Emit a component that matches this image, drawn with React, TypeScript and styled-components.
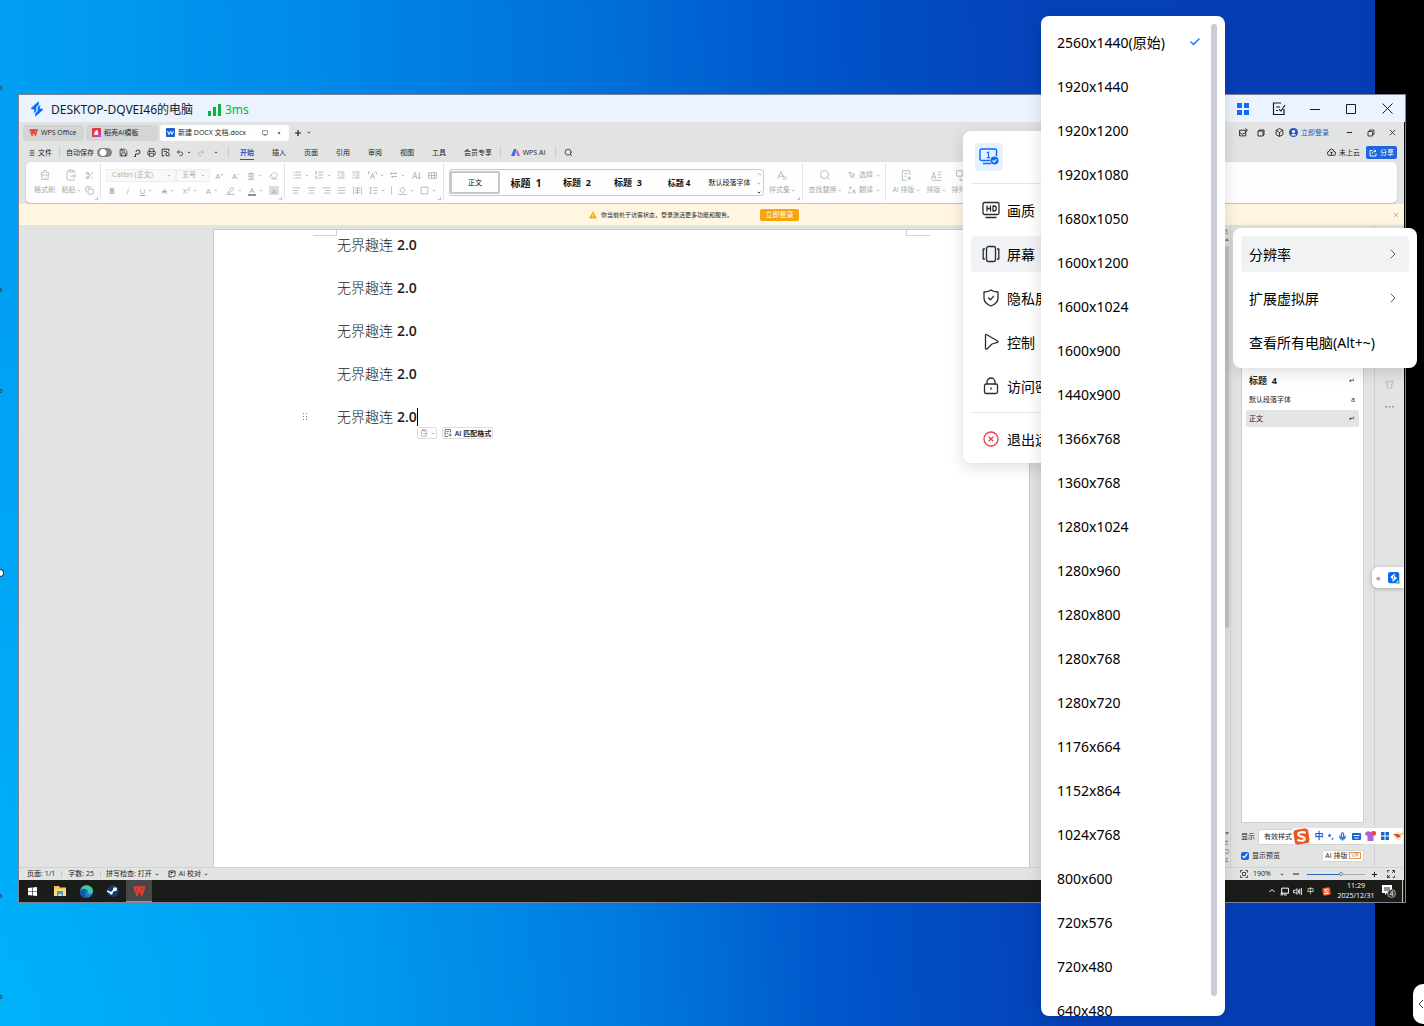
import React from 'react';
import styled, { createGlobalStyle, css } from 'styled-components';
import {
  Scissors, Copy, ClipboardPaste, Save, Printer, Undo2, Redo2, Search, Eraser, List, ListOrdered,
  AlignLeft, AlignCenter, AlignRight, AlignJustify, Shirt, Check, ChevronRight, Mic,
} from 'lucide-react';

const uiFont = `'Noto Sans', 'Noto Sans CJK SC', sans-serif`;
const officeFont = `'Open Sans', 'Noto Sans CJK SC', sans-serif`;

const GlobalStyle = createGlobalStyle`
  * { box-sizing: border-box; }
  html, body { margin: 0; height: 100%; overflow: hidden; }
  body { font-family: ${uiFont}; background: #000; }
  button, input, select { font: inherit; color: inherit; margin: 0; }
  button { padding: 0; border: 0; background: none; cursor: pointer; }
  ul { list-style: none; margin: 0; padding: 0; }
  svg { display: block; flex: none; }
  p { margin: 0; }
`;

/* ---------- desktop ---------- */

const Desktop = styled.div`
  position: relative;
  display: flex;
  height: 100vh;
  overflow: hidden;
  background: #000;
`;

const Wallpaper = styled.div`
  flex: 1;
  margin-right: 49px;
  background: linear-gradient(88deg, #00a2f4 0%, #008dea 22%, #006fda 45%, #0052c8 62%, #0443ba 74%, #063cb2 100%);
  position: relative;
  &::after {
    content: '';
    position: absolute;
    inset: 0;
    background: radial-gradient(ellipse 60% 70% at 0% 100%, rgba(0, 190, 255, 0.55) 0%, rgba(0, 170, 250, 0) 100%);
  }
`;

const EdgeMark = styled.i<{ $y: number; $big?: boolean }>`
  position: absolute;
  left: 0;
  top: ${(p) => p.$y}px;
  width: ${(p) => (p.$big ? 4 : 2)}px;
  height: ${(p) => (p.$big ? 8 : 4)}px;
  border: 1px solid #1b3a5e;
  border-left: 0;
  border-radius: 0 4px 4px 0;
  background: ${(p) => (p.$big ? '#fff' : '#5f7f98')};
  z-index: 1;
`;

const EdgeHandle = styled.button`
  position: absolute;
  right: 0;
  bottom: 2px;
  width: 11px;
  height: 40px;
  padding-left: 4px;
  border-radius: 10px 0 0 10px;
  background: #fff;
  overflow: hidden;
`;

/* ---------- remote window ---------- */

const Window = styled.main`
  position: absolute;
  inset: 94px 18px 123px 18px;
  display: flex;
  flex-direction: column;
  border: 1px solid #7b8494;
  background: #000;
`;

const TitleBar = styled.header`
  display: flex;
  align-items: center;
  flex: none;
  height: 27px;
  padding-left: 10px;
  background: #ebf3ff;
  color: #171b26;
`;

const TitleText = styled.h1`
  margin: 0 0 0 6px;
  padding-top: 2px;
  min-width: 157px;
  font-size: 12px;
  line-height: 25px;
  font-weight: 400;
`;

const Latency = styled.span`
  display: flex;
  align-items: center;
  gap: 4px;
  flex: 1;
  padding-top: 2px;
  font-size: 12px;
  line-height: 25px;
  color: #08b43c;
`;

const FrameButton = styled.button`
  display: grid;
  place-items: center;
  width: 36px;
  height: 26px;
`;

const Remote = styled.section`
  display: flex;
  flex-direction: column;
  flex: 1;
  min-height: 0;
  margin-right: 1px;
  background: #e1e4e2;
  font-family: ${officeFont};
  font-size: 7px;
  line-height: 10px;
  color: #1f2120;
`;

const TabStrip = styled.div`
  display: flex;
  align-items: center;
  flex: none;
  height: 21px;
  padding: 0 2px 0 4px;
  gap: 2px;
`;

const Tab = styled.button<{ $w: number; $active?: boolean }>`
  display: flex;
  align-items: center;
  gap: 3px;
  width: ${(p) => p.$w}px;
  height: 16px;
  padding: 0 6px;
  border-radius: 3px;
  white-space: nowrap;
  background: ${(p) => (p.$active ? '#fefefe' : '#d3d6d4')};
`;

const Spacer = styled.span`
  flex: 1;
`;

const Cell = styled.button<{ $w: number; $faint?: boolean }>`
  display: flex;
  align-items: center;
  justify-content: center;
  gap: 3px;
  flex: none;
  width: ${(p) => p.$w}px;
  height: 12px;
  white-space: nowrap;
  ${(p) => p.$faint && css`color: #a9acaa;`}
`;

const LoginLink = styled.a`
  display: flex;
  align-items: center;
  gap: 3px;
  margin: 0 8px 0 0;
  color: #2458b8;
  text-decoration: none;
  white-space: nowrap;
`;

const MenuRow = styled.div`
  display: flex;
  align-items: center;
  flex: none;
  height: 19px;
  padding: 0 7px 0 9px;
`;

const Divider = styled.i<{ $h?: number; $m?: number }>`
  flex: none;
  width: 1px;
  height: ${(p) => p.$h ?? 9}px;
  margin: 0 ${(p) => p.$m ?? 6}px;
  background: #c6c9c7;
`;

const MenuItems = styled.nav`
  display: flex;
  gap: 18px;
  margin-left: 5px;
`;

const MenuItem = styled.button<{ $active?: boolean }>`
  height: 15px;
  line-height: 13px;
  white-space: nowrap;
  border-bottom: 1px solid ${(p) => (p.$active ? '#2458b8' : 'transparent')};
  ${(p) => p.$active && css`color: #2458b8; font-weight: 700;`}
`;

const AutoSave = styled.label`
  display: flex;
  align-items: center;
  gap: 3px;
  margin-right: 4px;
  white-space: nowrap;
`;

const Toggle = styled.input`
  appearance: none;
  width: 15px;
  height: 9px;
  border-radius: 5px;
  background: radial-gradient(circle at 5px 50%, #fff 0 3px, transparent 4px) #808381;
  border: 1px solid #808381;
`;

const ShareButton = styled.button`
  display: flex;
  align-items: center;
  justify-content: center;
  gap: 3px;
  width: 31px;
  height: 13px;
  margin-left: 7px;
  border-radius: 2px;
  background: #1f65dd;
  color: #fff;
`;

const Ribbon = styled.div`
  display: flex;
  align-items: center;
  flex: none;
  height: 41px;
  margin: 0 7px 1px;
  border-radius: 5px;
  background: #fdfefd;
  color: #a9acaa;
  box-shadow: 0 1px 2px rgba(0, 0, 0, 0.18);
  overflow: hidden;
`;

const Group = styled.div<{ $w: number }>`
  position: relative;
  display: flex;
  flex-direction: column;
  justify-content: center;
  gap: 3px;
  flex: none;
  width: ${(p) => p.$w}px;
  height: 37px;
  border-right: 1px solid #e2e4e3;
`;

const Line = styled.div<{ $pad?: number }>`
  display: flex;
  align-items: center;
  height: 12px;
  padding-left: ${(p) => p.$pad ?? 0}px;
`;

const Columns = styled.div`
  display: flex;
`;

const Pair = styled.div`
  display: flex;
  flex-direction: column;
  gap: 3px;
`;

const Stack = styled.button<{ $w: number }>`
  display: flex;
  flex-direction: column;
  align-items: center;
  gap: 3px;
  flex: none;
  width: ${(p) => p.$w}px;
  white-space: nowrap;
`;

const StackIcon = styled.span`
  display: grid;
  place-items: center;
  height: 12px;
`;

const StackLabel = styled.span`
  display: flex;
  align-items: center;
  gap: 1px;
  height: 12px;
`;

const Corner = styled.i`
  position: absolute;
  right: 2px;
  bottom: 1px;
  width: 3px;
  height: 3px;
  border: solid #bfc2c0;
  border-width: 0 1px 1px 0;
`;

const Combo = styled.span<{ $w: number }>`
  display: flex;
  align-items: center;
  width: ${(p) => p.$w}px;
  height: 13px;
  padding-right: 4px;
  border: 1px solid #eceeed;
  background: #f8f9f8;
  select {
    appearance: none;
    flex: 1;
    min-width: 0;
    padding: 0 0 0 5px;
    border: 0;
    background: none;
    outline: 0;
  }
`;

const Letter = styled.span<{ $bold?: boolean; $italic?: boolean; $under?: boolean; $strike?: boolean; $bar?: boolean; $fill?: boolean }>`
  font-size: 8px;
  line-height: 9px;
  font-weight: ${(p) => (p.$bold ? 700 : 400)};
  font-style: ${(p) => (p.$italic ? 'italic' : 'normal')};
  text-decoration: ${(p) => (p.$under ? 'underline' : p.$strike ? 'line-through' : 'none')};
  ${(p) => p.$bar && css`border-bottom: 2px solid #8f9290; padding: 0 1px;`}
  ${(p) => p.$fill && css`background: #dcdfdd; padding: 0 2px;`}
`;

const Gallery = styled.div`
  display: flex;
  align-items: center;
  flex: none;
  width: 315px;
  height: 27px;
  margin: 0 5px;
  border: 1px solid #c9cccb;
  border-radius: 3px;
  color: #111;
`;

const StyleChip = styled.button<{ $w: number; $size?: number; $bold?: boolean; $active?: boolean }>`
  flex: none;
  width: ${(p) => p.$w}px;
  height: 23px;
  font-size: ${(p) => p.$size ?? 7}px;
  font-weight: ${(p) => (p.$bold ? 700 : 400)};
  white-space: pre;
  ${(p) => p.$active && css`border: 2px solid #c5c8c6; border-radius: 2px;`}
`;

const GalleryArrows = styled.span`
  display: flex;
  flex-direction: column;
  justify-content: space-between;
  align-items: center;
  width: 8px;
  height: 22px;
  color: #999;
`;

const Notice = styled.div`
  display: flex;
  align-items: center;
  flex: none;
  height: 21px;
  padding: 0 5px 0 570px;
  background: #fff5e1;
`;

const NoticeText = styled.p`
  margin: 0 18px 0 4px;
  min-width: 141px;
  font-size: 6px;
  white-space: nowrap;
`;

const NoticeButton = styled.button`
  width: 39px;
  height: 12px;
  border-radius: 2px;
  background: #f5a50d;
  color: #fff;
`;

/* ---------- workspace ---------- */

const Workspace = styled.div`
  position: relative;
  display: flex;
  flex: 1;
  min-height: 0;
`;

const Canvas = styled.div`
  flex: 1;
  display: flex;
  padding: 4px 193px 0 194px;
`;

const Page = styled.article`
  position: relative;
  flex: 1;
  padding-left: 123px;
  background: #fefffe;
  border: solid #c9ccca;
  border-width: 1px 1px 0 1px;
  color: #1b1b1b;
  font-size: 14px;
`;

const CropMark = styled.i<{ $right?: boolean }>`
  position: absolute;
  top: 0;
  ${(p) => (p.$right ? 'right: 99px; border-width: 0 0 1px 1px;' : 'left: 99px; border-width: 0 1px 1px 0;')}
  width: 24px;
  height: 6px;
  border-style: solid;
  border-color: #cfd2d0;
`;

const Paragraph = styled.p`
  position: relative;
  display: flex;
  gap: 4px;
  height: 43px;
  line-height: 30px;
  font-weight: 300;
  b { font-weight: 600; }
`;

const Caret = styled.i`
  width: 1px;
  height: 18px;
  margin: 6px 0 0 -4px;
  background: #000;
`;

const DragDots = styled.span`
  position: absolute;
  left: -34px;
  top: 11px;
`;

const PasteHints = styled.div`
  display: flex;
  gap: 5px;
  margin: -18px 0 0 80px;
  font-size: 7px;
  line-height: 9px;
`;

const HintButton = styled.button<{ $w: number }>`
  display: flex;
  align-items: center;
  justify-content: center;
  gap: 3px;
  width: ${(p) => p.$w}px;
  height: 12px;
  border: 1px solid #dcdedd;
  border-radius: 2px;
  background: #fff;
  white-space: nowrap;
  font-weight: 600;
`;

const ScrollColumn = styled.div`
  display: flex;
  flex-direction: column;
  align-items: center;
  gap: 4px;
  flex: none;
  width: 7px;
  padding: 4px 0 4px;
  color: #8a8d8b;
`;

const ScrollThumb = styled.i`
  width: 4px;
  height: 382px;
  border-radius: 2px;
  background: #c3c6c4;
`;

const StylePanel = styled.aside`
  display: flex;
  flex-direction: column;
  flex: none;
  width: 144px;
  padding: 6px 10px 2px;
  border-left: 1px solid #d3d6d4;
`;

const StyleList = styled.ul`
  flex: 1;
  margin-bottom: 4px;
  padding: 140px 4px 0;
  border: 1px solid #cfd2d0;
  background: #fefffe;
`;

const StyleRow = styled.li<{ $active?: boolean }>`
  display: flex;
  justify-content: space-between;
  align-items: center;
  height: 17px;
  margin-bottom: 2px;
  padding: 0 4px 0 3px;
  border-radius: 2px;
  background: ${(p) => (p.$active ? '#e2e5e3' : 'transparent')};
  b { font-size: 9px; white-space: pre; }
`;

const PanelLine = styled.div`
  display: flex;
  align-items: center;
  justify-content: space-between;
  height: 19px;
  label { display: flex; align-items: center; gap: 3px; }
`;

const FilterSelect = styled.select`
  appearance: none;
  width: 106px;
  height: 16px;
  padding: 0 5px;
  border: 1px solid #d2d5d3;
  border-radius: 2px;
  background: #fff;
`;

const Tick = styled.input`
  width: 8px;
  height: 8px;
  accent-color: #1b64dd;
`;

const PanelButton = styled.button`
  display: flex;
  align-items: center;
  justify-content: center;
  gap: 2px;
  width: 42px;
  height: 12px;
  border: 1px solid #d4d6d5;
  border-radius: 2px;
  background: #fff;
  white-space: nowrap;
`;

const Vip = styled.i`
  padding: 0 1px;
  border: 1px solid #d99b52;
  font-size: 5px;
  line-height: 5px;
  font-style: normal;
  color: #b9752a;
`;

const Rail = styled.div`
  display: flex;
  flex-direction: column;
  align-items: center;
  gap: 17px;
  flex: none;
  width: 30px;
  padding-top: 155px;
  border-left: 1px solid #d0d3d1;
  color: #999c9a;
`;

const FloatTab = styled.button`
  position: absolute;
  right: 0;
  top: 342px;
  display: flex;
  align-items: center;
  gap: 8px;
  width: 32px;
  height: 21px;
  padding-left: 4px;
  border-radius: 6px 0 0 6px;
  background: #fff;
  box-shadow: 0 1px 4px rgba(0, 0, 0, 0.25);
  font-size: 9px;
  color: #555;
`;

const ImeBar = styled.div`
  position: absolute;
  right: 1px;
  bottom: 23px;
  display: flex;
  align-items: center;
  justify-content: space-between;
  width: 110px;
  height: 16px;
  background: #fff;
  font-size: 9px;
  font-weight: 700;
  color: #1766cf;
`;

const StatusBar = styled.footer`
  display: flex;
  align-items: center;
  flex: none;
  height: 13px;
  padding: 0 3px 0 8px;
  border-top: 1px solid #cfd2d0;
  white-space: nowrap;
`;

const Zoom = styled.input`
  appearance: none;
  width: 58px;
  height: 5px;
  margin: 0 2px 0 6px;
  background: linear-gradient(90deg, #2b62bd 0 34px, #a9adab 34px) center / 100% 1px no-repeat;
  &::-webkit-slider-thumb {
    appearance: none;
    width: 4px;
    height: 4px;
    border-radius: 50%;
    background: #fff;
    border: 1px solid #777;
  }
`;

const Taskbar = styled.footer`
  display: flex;
  align-items: center;
  flex: none;
  height: 22px;
  background: #1a1c1a;
  color: #fff;
`;

const TaskButton = styled.button<{ $w?: number; $active?: boolean }>`
  display: grid;
  place-items: center;
  flex: none;
  width: ${(p) => p.$w ?? 27}px;
  height: 22px;
  ${(p) => p.$active && css`background: #454846; border-bottom: 1px solid #6fa6cf;`}
`;

const Clock = styled.time`
  width: 42px;
  text-align: center;
  line-height: 10px;
`;

/* ---------- popup menus ---------- */

const Popup = styled.nav`
  position: absolute;
  width: 184px;
  padding: 8px;
  border-radius: 8px;
  background: #fff;
  box-shadow: 0 4px 16px rgba(0, 0, 0, 0.14);
  font-size: 14px;
  line-height: 20px;
  color: #000;
`;

const ControlPopup = styled(Popup)`
  top: 131px;
  right: 277px;
  padding-bottom: 6px;
`;

const ResolutionPopup = styled(Popup)`
  top: 16px;
  bottom: 10px;
  right: 199px;
  overflow: hidden;
`;

const ScreenPopup = styled(Popup)`
  top: 228px;
  right: 7px;
`;

const PopupList = styled.ul`
  display: flex;
  flex-direction: column;
  gap: 8px;
`;

const PopupItem = styled.button<{ $active?: boolean }>`
  display: flex;
  align-items: center;
  gap: 4px;
  width: 100%;
  height: 36px;
  padding: 0 8px;
  border-radius: 4px;
  text-align: left;
  white-space: nowrap;
  background: ${(p) => (p.$active ? '#f1f2f4' : 'transparent')};
`;

const PopupIcon = styled.span`
  display: grid;
  place-items: center;
  width: 24px;
`;

const PopupLabel = styled.span`
  flex: 1;
  padding-top: 2px;
`;

const CheckMark = styled(Check)`
  margin-right: 8px;
`;

const Rule = styled.hr`
  height: 1px;
  margin: 8px 0;
  border: 0;
  background: #e5e6ea;
`;

const ScreenPick = styled.button`
  display: grid;
  place-items: center;
  width: 28px;
  height: 28px;
  margin: 4px 0 12px 4px;
  border-radius: 4px;
  background: #e6f0ff;
`;

const ResolutionThumb = styled.i`
  position: absolute;
  top: 8px;
  right: 8px;
  bottom: 20px;
  width: 6px;
  border-radius: 3px;
  background: #c8cdd6;
`;

/* ---------- drawings ---------- */

const Down = ({ c = 'currentColor' }: { c?: string }) => (
  <svg width="4" height="3" viewBox="0 0 5 4" fill="none" stroke={c}><path d="M.8 1 2.5 2.8 4.2 1" /></svg>
);

const Draw = ({ d, s = 10, w = 1.2, c = 'currentColor' }: { d: string; s?: number; w?: number; c?: string }) => (
  <svg width={s} height={s} viewBox="0 0 16 16" fill="none" stroke={c} strokeWidth={w * 16 / s} strokeLinejoin="round"><path d={d} /></svg>
);

const g = {
  outdent: 'M1 2h14M8 6h7M8 10h7M1 14h14M5 5 2 8l3 3',
  indent: 'M1 2h14M8 6h7M8 10h7M1 14h14M2 5l3 3-3 3',
  textFx: 'M1 2h3M1 2v4M15 2h-3M15 2v4M4 14 8 4l4 10M6 10h4',
  wrap: 'M2 5h11l-3-3M14 11H3l3 3M2 2v6',
  sort: 'M1 14 5 2l4 12M2 10h6M13 2v12M11 11l2 3 2-3',
  table: 'M1 3h14v10H1zM1 8h14M6 3v10M11 3v10',
  distribute: 'M1 1v14M15 1v14M4 4h8M4 8h8M4 12h8M8 2v12',
  spacing: 'M3 2v12M1 4l2-2 2 2M1 12l2 2 2-2M8 3h7M8 8h7M8 13h7',
  bucket: 'M3 8l5-6 5 6-5 4zM1 15h14',
  border: 'M2 2h12v12H2z',
  pen: 'M3 11 11 2l3 3-8 8H3zM1 15h14',
  cursor: 'M2 2l5 12 2-5 5-2zM10 10l4 4',
  translate: 'M2 3h6M5 1v2M2 8l5-5M9 15l3-8 3 8M10 12h4M2 11v3h4',
  layout: 'M13 7V1H2v14h6M5 5h5M5 9h3M12 9v6M9 12h6',
  textPage: 'M1 13 4 3l3 10M2 10h4M10 3h5M10 7h5M10 11h5M1 15h14',
  arrange: 'M1 1h8v8H1zM6 11v4h9V6h-4',
  styles: 'M1 13 6 2l5 11M3 9h6M9 14l5-6M12 15l3-3',
  brush: 'M6 4V1h4v3h4v4H2V4zM3 8v7h10V8M9 15v-4',
  monitor: 'M1 2h14v10H1zM5 15h6',
  inbox: 'M1 4h11v10H1zM1 8l5 3 6-3M11 1l4 3-4 3',
  layers: 'M4 4V2h10v10h-2M2 4h10v10H2z',
  cube: 'M8 1l6 3v8l-6 3-6-3V4zM2 4l6 4 6-4M8 8v7',
  minus: 'M2 8h12',
  restore: 'M2 5h9v9H2zM5 5V2h9v9h-3',
  close: 'M2 2l12 12M14 2 2 14',
  share: 'M7 3H2v11h12V9M6 10c0-4 3-6 8-6M11 1l3 3-3 3',
  cloud: 'M4 13a3 3 0 0 1 0-7 4 4 0 0 1 8 0 3 3 0 0 1 0 7zM8 12V7M6 9l2-2 2 2',
  plus: 'M8 2v12M2 8h12',
  link: 'M5 15v-5h5a4 4 0 1 0-4-4M5 15H2',
  preview: 'M14 6V2H2v12h4M5 6h5M12 8a3 3 0 1 1-1 6 3 3 0 0 1 1-6M14 13l2 2',
  fit: 'M1 5V1h4M11 1h4v4M15 11v4h-4M5 15H1v-4M5 5h6v6H5z',
  expand: 'M10 1h5v5M15 1l-5 5M6 15H1v-5M1 15l5-5M1 5V1h4M15 11v4h-4',
  docCheck: 'M14 8V2H2v12h6M5 5h6M5 8h3M9 12l2 2 4-5',
  speaker: 'M1 6v4h3l3 3V3L4 6zM10 5v6M12 3v10M15 2v12',
  up: 'M3 10l5-5 5 5',
};

const boltPath = 'M9.8.3 2.3 6.8v1.400l3.200.4-1 3.600L7.300 10V6l2.500-2.200zM6.200 15.700l7.500-6.500V7.800l-3.200-.4 1-3.600L8.700 6v4l-2.500 2.200z';

const Bolt = () => (
  <svg width="16" height="16" viewBox="0 0 16 16" fill="#0b6cff"><path d={boltPath} /></svg>
);

const WpsMark = ({ s = 9 }: { s?: number }) => (
  <svg width={s + 2} height={s} viewBox="0 0 18 15" fill="none" stroke="#e93c2b" strokeWidth="3">
    <path d="M1 2h6l1 8M2 2l4 11 4-11 3 11 4-11H8" />
  </svg>
);

const SogouMark = ({ s = 15 }: { s?: number }) => (
  <svg width={s} height={s} viewBox="0 0 16 16">
    <rect x="1" y="1" width="14" height="14" rx="3" fill="#ee5622" transform="rotate(-8 8 8)" />
    <path d="M12 4.500C9 3.500 5 3.800 5 6s6 2 6 4.200-4 2.300-7 1" fill="none" stroke="#fff" strokeWidth="2" />
  </svg>
);

const AppTabs = () => (
  <TabStrip>
    <Tab $w={61}><WpsMark s={7} />WPS Office</Tab>
    <Tab $w={72}>
      <svg width="9" height="9" viewBox="0 0 9 9"><rect width="9" height="9" rx="1" fill="#e5374c" /><path d="M2 7c0-4 3-5 3-5s2 2 1 5z" fill="#fff" /><path d="M6 6h3v3H5z" fill="#b44be8" /></svg>
      稻壳AI模板
    </Tab>
    <Tab $w={129} $active>
      <svg width="9" height="9" viewBox="0 0 9 9"><rect width="9" height="9" rx="1" fill="#1a60d6" /><path d="M1.500 3l1.500 3.500L4.500 3 6 6.500 7.500 3" fill="none" stroke="#fff" /></svg>
      新建 DOCX 文档.docx
      <Spacer />
      <Draw d={g.monitor} s={6} w={0.8} c="#777" />
      <svg width="12" height="4" viewBox="0 0 12 4"><circle cx="8" cy="2" r="1.300" fill="#777" /></svg>
    </Tab>
    <Cell $w={14} aria-label="新建"><Draw d={g.plus} s={8} /></Cell>
    <Cell $w={4} aria-label="更多"><Down /></Cell>
    <Spacer />
    <Cell $w={16} aria-label="收件"><Draw d={g.inbox} s={9} w={0.9} /></Cell>
    <Cell $w={16} aria-label="窗口"><Draw d={g.layers} s={8} w={0.9} /></Cell>
    <Cell $w={16} aria-label="应用"><Draw d={g.cube} s={9} w={0.9} /></Cell>
    <LoginLink href="#login">
      <svg width="9" height="9" viewBox="0 0 9 9"><circle cx="4.500" cy="4.500" r="4.500" fill="#2458c0" /><circle cx="4.500" cy="3.500" r="1.600" fill="#fff" /><path d="M2 7.500c.5-2.500 4.500-2.500 5 0" fill="#fff" /></svg>
      立即登录
    </LoginLink>
    <Cell $w={20} aria-label="最小化"><Draw d={g.minus} s={7} w={1} /></Cell>
    <Cell $w={20} aria-label="还原"><Draw d={g.restore} s={8} w={0.8} /></Cell>
    <Cell $w={19} aria-label="关闭"><Draw d={g.close} s={7} w={0.8} /></Cell>
  </TabStrip>
);

const menuNames = ['开始', '插入', '页面', '引用', '审阅', '视图', '工具', '会员专享'];

const AppMenu = () => (
  <MenuRow>
    <Cell $w={25}><Draw d="M2 2h12M2 8h12M2 14h12" s={6} w={0.8} />文件</Cell>
    <Divider />
    <AutoSave>自动保存<Toggle type="checkbox" role="switch" /></AutoSave>
    <Cell $w={14} aria-label="保存"><Save size={9} /></Cell>
    <Cell $w={14} aria-label="输出"><Draw d={g.link} s={8} w={0.9} /></Cell>
    <Cell $w={14} aria-label="打印"><Printer size={9} /></Cell>
    <Cell $w={15} aria-label="预览"><Draw d={g.preview} s={9} w={0.9} /></Cell>
    <Cell $w={20} aria-label="撤销"><Undo2 size={8} /><Down /></Cell>
    <Cell $w={16} $faint aria-label="恢复"><Redo2 size={8} /></Cell>
    <Cell $w={13} aria-label="更多"><Down /></Cell>
    <Divider />
    <MenuItems>
      {menuNames.map((n, i) => <MenuItem key={n} $active={i === 0}>{n}</MenuItem>)}
    </MenuItems>
    <Divider $m={8} />
    <Cell $w={38}>
      <svg width="9" height="7" viewBox="0 0 9 7"><path d="M0 7 3 0h2.500L3.500 7z" fill="#2f6bf2" /><path d="M5 3l1.500-2L9 7H6.500z" fill="#e64fae" /></svg>
      WPS AI
    </Cell>
    <Divider $m={8} />
    <Cell $w={8} aria-label="搜索"><Search size={9} /></Cell>
    <Spacer />
    <Cell $w={31}><Draw d={g.cloud} s={9} w={0.9} />未上云</Cell>
    <ShareButton><Draw d={g.share} s={8} w={0.9} />分享</ShareButton>
  </MenuRow>
);

const AppRibbon = () => (
  <Ribbon>
    <Group $w={75}>
      <Columns>
        <Stack $w={37}><StackIcon><Draw d={g.brush} s={10} w={0.7} /></StackIcon><StackLabel>格式刷</StackLabel></Stack>
        <Stack $w={16}><StackIcon><ClipboardPaste size={12} strokeWidth={1.500} /></StackIcon><StackLabel>粘贴<Down /></StackLabel></Stack>
        <Stack $w={20}><StackIcon><Scissors size={9} /></StackIcon><StackIcon><Copy size={9} /></StackIcon></Stack>
      </Columns>
      <Corner />
    </Group>
    <Group $w={184}>
      <Line $pad={5}>
        <Combo $w={70}><select aria-label="字体"><option>Calibri (正文)</option></select><Down /></Combo>
        <Combo $w={34}><select aria-label="字号"><option>五号</option></select><Down /></Combo>
        <Cell $w={18}><Letter>A⁺</Letter></Cell>
        <Cell $w={16}><Letter>A⁻</Letter></Cell>
        <Cell $w={21}><Letter>变</Letter><Down /></Cell>
        <Cell $w={16} aria-label="清除格式"><Eraser size={9} /></Cell>
      </Line>
      <Line $pad={3}>
        <Cell $w={16}><Letter $bold>B</Letter></Cell>
        <Cell $w={15}><Letter $italic>I</Letter></Cell>
        <Cell $w={22}><Letter $under>U</Letter><Down /></Cell>
        <Cell $w={22}><Letter $strike>A</Letter><Down /></Cell>
        <Cell $w={22}><Letter>X²</Letter><Down /></Cell>
        <Cell $w={22}><Letter>A</Letter><Down /></Cell>
        <Cell $w={22} aria-label="突出显示"><Draw d={g.pen} s={9} w={0.8} /><Down /></Cell>
        <Cell $w={21}><Letter $bar>A</Letter><Down /></Cell>
        <Cell $w={16}><Letter $fill>A</Letter></Cell>
      </Line>
      <Corner />
    </Group>
    <Group $w={159}>
      <Line $pad={4}>
        <Cell $w={22} aria-label="项目符号"><List size={10} /><Down /></Cell>
        <Cell $w={22} aria-label="编号"><ListOrdered size={10} /><Down /></Cell>
        <Cell $w={15} aria-label="减少缩进"><Draw d={g.outdent} s={8} w={0.8} /></Cell>
        <Cell $w={16} aria-label="增加缩进"><Draw d={g.indent} s={8} w={0.8} /></Cell>
        <Cell $w={23} aria-label="字符效果"><Draw d={g.textFx} s={9} w={0.8} /><Down /></Cell>
        <Cell $w={21} aria-label="换行"><Draw d={g.wrap} s={8} w={0.8} /><Down /></Cell>
        <Cell $w={16} aria-label="排序"><Draw d={g.sort} s={9} w={0.8} /></Cell>
        <Cell $w={16} aria-label="表格"><Draw d={g.table} s={9} w={0.8} /></Cell>
      </Line>
      <Line $pad={4}>
        <Cell $w={15} aria-label="左对齐"><AlignLeft size={9} /></Cell>
        <Cell $w={15} aria-label="居中"><AlignCenter size={9} /></Cell>
        <Cell $w={15} aria-label="右对齐"><AlignRight size={9} /></Cell>
        <Cell $w={15} aria-label="两端对齐"><AlignJustify size={9} /></Cell>
        <Cell $w={16} aria-label="分散对齐"><Draw d={g.distribute} s={9} w={0.8} /></Cell>
        <Cell $w={23} aria-label="行距"><Draw d={g.spacing} s={9} w={0.8} /><Down /></Cell>
        <Divider $m={3} />
        <Cell $w={22} aria-label="底纹"><Draw d={g.bucket} s={9} w={0.8} /><Down /></Cell>
        <Cell $w={22} aria-label="边框"><Draw d={g.border} s={9} w={0.8} /><Down /></Cell>
      </Line>
      <Corner />
    </Group>
    <Gallery>
      <StyleChip $w={50} $active>正文</StyleChip>
      <StyleChip $w={52} $size={10} $bold>标题  1</StyleChip>
      <StyleChip $w={50} $size={9} $bold>标题  2</StyleChip>
      <StyleChip $w={52} $size={9} $bold>标题  3</StyleChip>
      <StyleChip $w={50} $size={8} $bold>标题 4</StyleChip>
      <StyleChip $w={51}>默认段落字体</StyleChip>
      <GalleryArrows><Draw d={g.up} s={5} w={0.8} /><Down /><Down c="#000" /></GalleryArrows>
    </Gallery>
    <Group $w={34}>
      <Stack $w={26}><StackIcon><Draw d={g.styles} s={11} w={0.8} /></StackIcon><StackLabel>样式集<Down /></StackLabel></Stack>
      <Corner />
    </Group>
    <Group $w={83}>
      <Columns>
        <Stack $w={44}><StackIcon><Search size={12} strokeWidth={1.500} /></StackIcon><StackLabel>查找替换<Down /></StackLabel></Stack>
        <Pair>
          <Cell $w={34}><Draw d={g.cursor} s={8} w={0.8} />选择<Down /></Cell>
          <Cell $w={34}><Draw d={g.translate} s={8} w={0.8} />翻译<Down /></Cell>
        </Pair>
      </Columns>
    </Group>
    <Columns>
      <Stack $w={40}><StackIcon><Draw d={g.layout} s={11} w={0.8} /></StackIcon><StackLabel>AI 排版<Down /></StackLabel></Stack>
      <Stack $w={20}><StackIcon><Draw d={g.textPage} s={11} w={0.8} /></StackIcon><StackLabel>排版<Down /></StackLabel></Stack>
      <Stack $w={30}><StackIcon><Draw d={g.arrange} s={11} w={0.8} /></StackIcon><StackLabel>排列<Down /></StackLabel></Stack>
    </Columns>
  </Ribbon>
);

const Document = () => (
  <Canvas>
    <Page>
      <CropMark /><CropMark $right />
      {[0, 1, 2, 3, 4].map((i) => (
        <Paragraph key={i}>
          {i === 4 && (
            <DragDots>
              <svg width="5" height="8" viewBox="0 0 5 8" fill="#777"><path d="M0 0h1v1H0zM3 0h1v1H3zM0 3h1v1H0zM3 3h1v1H3zM0 6h1v1H0zM3 6h1v1H3z" /></svg>
            </DragDots>
          )}
          <span>无界趣连</span><b>2.0</b>
          {i === 4 && <Caret />}
        </Paragraph>
      ))}
      <PasteHints>
        <HintButton $w={20} aria-label="粘贴选项"><ClipboardPaste size={8} color="#999" /><Down c="#999" /></HintButton>
        <HintButton $w={51}><Draw d={g.layout} s={8} w={0.9} c="#667" />AI 匹配格式</HintButton>
      </PasteHints>
    </Page>
  </Canvas>
);

const Panel = () => (
  <StylePanel>
    <StyleList>
      <StyleRow><b>标题  4</b><span>↵</span></StyleRow>
      <StyleRow>默认段落字体<span>a</span></StyleRow>
      <StyleRow $active>正文<span>↵</span></StyleRow>
    </StyleList>
    <PanelLine>
      <label htmlFor="style-filter">显示</label>
      <FilterSelect id="style-filter"><option>有效样式</option></FilterSelect>
    </PanelLine>
    <PanelLine>
      <label><Tick type="checkbox" defaultChecked />显示预览</label>
      <PanelButton>AI 排版<Vip>VIP</Vip></PanelButton>
    </PanelLine>
  </StylePanel>
);

const Tasks = () => (
  <Taskbar>
    <TaskButton aria-label="开始菜单"><svg width="9" height="9" viewBox="0 0 9 9" fill="#fff"><path d="M0 1l4-.6V4.200H0zM4.600.4 9 0v4.200H4.600zM0 4.800h4v3.800L0 8zM4.600 4.800H9V9l-4.400-.5z" /></svg></TaskButton>
    <TaskButton aria-label="文件资源管理器"><svg width="12" height="10" viewBox="0 0 12 10"><path d="M0 0h5l1 1.500h6V10H0z" fill="#f4c24a" /><path d="M0 3h12v7H0z" fill="#fbdc7c" /><path d="M3 5h6v5H7.500V8h-3v2H3z" fill="#3f9bdc" /></svg></TaskButton>
    <TaskButton aria-label="Edge">
      <svg width="13" height="13" viewBox="0 0 13 13"><circle cx="6.500" cy="6.500" r="6.500" fill="#1b7fd6" /><path d="M.5 5C2-1 12-1 13 6c0 3-4 3.500-5 2 1-2-1-4-3-4S1 5 .5 7z" fill="#42c9a0" /><path d="M0 7c1-4 6-4 6-1-2 2-1 6 3 6-5 3-9-1-9-5z" fill="#1259a8" /></svg>
    </TaskButton>
    <TaskButton $w={26} aria-label="Steam">
      <svg width="12" height="12" viewBox="0 0 12 12"><circle cx="6" cy="6" r="6" fill="#15396f" /><path d="M0 6l4 2 3-3 1-2" fill="none" stroke="#fff" strokeWidth="1.500" /><circle cx="8" cy="4.200" r="2" fill="#fff" /><circle cx="4.200" cy="8" r="1.600" fill="#fff" /></svg>
    </TaskButton>
    <TaskButton $w={26} $active aria-label="WPS"><WpsMark s={10} /></TaskButton>
    <Spacer />
    <TaskButton $w={13} aria-label="隐藏的图标"><Draw d={g.up} s={8} w={1} /></TaskButton>
    <TaskButton $w={13} aria-label="网络"><Draw d="M3 2h12v9H3zM1 11h4v3H1M7 14h5" s={9} w={1} /></TaskButton>
    <TaskButton $w={13} aria-label="音量"><Draw d={g.speaker} s={9} w={0.9} /></TaskButton>
    <TaskButton $w={13}>中</TaskButton>
    <TaskButton $w={18} aria-label="搜狗"><SogouMark s={9} /></TaskButton>
    <Clock>11:29<br />2025/12/31</Clock>
    <TaskButton $w={24} aria-label="通知">
      <svg width="14" height="13" viewBox="0 0 14 13"><path d="M0 0h10v8H5L3 10V8H0z" fill="#fff" /><path d="M2 3h6M2 5h6" stroke="#222" /><circle cx="9.500" cy="8.500" r="4" fill="#333" stroke="#ddd" strokeWidth=".7" /><text x="7.500" y="11" fontSize="7" fill="#fff">4</text></svg>
    </TaskButton>
    <Divider $h={22} $m={1} />
  </Taskbar>
);

const resolutions = [
  '2560x1440(原始)', '1920x1440', '1920x1200', '1920x1080', '1680x1050', '1600x1200', '1600x1024', '1600x900',
  '1440x900', '1366x768', '1360x768', '1280x1024', '1280x960', '1280x800', '1280x768', '1280x720', '1176x664',
  '1152x864', '1024x768', '800x600', '720x576', '720x480', '640x480',
];

const line = { fill: 'none', stroke: '#272b35', strokeWidth: 1.3, strokeLinejoin: 'round' as const, strokeLinecap: 'round' as const };

const controls = [
  { name: '画质', icon: <svg width="18" height="18" viewBox="0 0 18 18" {...line}><rect x="1" y="1.500" width="16" height="12" rx="1.500" /><path d="M4 16.500h10" /><path d="M5 5v5M8.500 5v5M5 7.500h3.500M11 5v5h1c3 0 3-5 0-5z" /></svg> },
  { name: '屏幕', active: true, icon: <svg width="18" height="18" viewBox="0 0 18 18" {...line}><rect x="4.500" y="1.500" width="9" height="15" rx="2" /><path d="M2.500 4H1.200v10h1.300M15.500 4h1.300v10h-1.300" /></svg> },
  { name: '隐私屏', icon: <svg width="18" height="18" viewBox="0 0 18 18" {...line}><path d="M9 1c2 1.500 4.500 2 7 2v6c0 4-3 6.500-7 8-4-1.500-7-4-7-8V3c2.500 0 5-.5 7-2z" /><path d="M6.500 9l2 1.800 3-3.500" /></svg> },
  { name: '控制', icon: <svg width="18" height="18" viewBox="0 0 18 18" {...line}><path d="M3.500 2.500c0-1 .6-1.300 1.400-.8L15.500 8c.8.500.8 1 0 1.300L10 11l-5 5c-.7.600-1.500.300-1.500-.7z" /></svg> },
  { name: '访问密码', icon: <svg width="18" height="18" viewBox="0 0 18 18" {...line}><rect x="2.500" y="7" width="13" height="9.500" rx="1.500" /><path d="M5 7V5a4 4 0 0 1 8 0v2M9 10.800v1.500" /></svg> },
];

export default function App() {
  return (
    <Desktop>
      <GlobalStyle />
      <Wallpaper />
      <EdgeMark $y={86} /><EdgeMark $y={288} /><EdgeMark $y={389} /><EdgeMark $y={569} $big /><EdgeMark $y={894} /><EdgeMark $y={995} />

      <Window>
        <TitleBar>
          <Bolt />
          <TitleText>DESKTOP-DQVEI46的电脑</TitleText>
          <Latency>
            <svg width="13" height="12" viewBox="0 0 13 12" fill="#08b43c"><path d="M0 7h3v5H0zM5 3h3v9H5zM10 0h3v12h-3z" /></svg>
            3ms
          </Latency>
          <FrameButton aria-label="所有电脑"><svg width="12" height="12" viewBox="0 0 12 12" fill="#0b6cff"><path d="M0 0h5v5H0zM7 0h5v5H7zM0 7h5v5H0zM7 7h5v5H7z" /></svg></FrameButton>
          <FrameButton aria-label="备注"><svg width="14" height="14" viewBox="0 0 14 14" fill="none" stroke="#171b26" strokeWidth="1.200"><path d="M9 1H1.500v11.500H12V7M4 5h4M4 8.500h2M7 7.500l2 1.500L13 3" /></svg></FrameButton>
          <FrameButton aria-label="最小化"><svg width="10" height="10" viewBox="0 0 10 10" stroke="#171b26"><path d="M0 5.500h10" /></svg></FrameButton>
          <FrameButton aria-label="最大化"><svg width="10" height="10" viewBox="0 0 10 10" fill="none" stroke="#171b26"><path d="M.5.5h9v9h-9z" /></svg></FrameButton>
          <FrameButton aria-label="关闭"><svg width="11" height="11" viewBox="0 0 11 11" stroke="#171b26"><path d="M.5.5l10 10M10.500.5l-10 10" /></svg></FrameButton>
        </TitleBar>

        <Remote>
          <AppTabs />
          <AppMenu />
          <AppRibbon />
          <Notice>
            <svg width="8" height="8" viewBox="0 0 8 8"><path d="M4 .3 8 7.500H0z" fill="#f5a50d" /><path d="M4 3v2.300M4 5.800v.9" stroke="#fff" strokeWidth=".9" /></svg>
            <NoticeText>你当前处于访客状态，登录激活更多功能和服务。</NoticeText>
            <NoticeButton>立即登录</NoticeButton>
            <Spacer />
            <Cell $w={6} $faint aria-label="关闭提示"><Draw d={g.close} s={6} w={0.8} /></Cell>
          </Notice>
          <Workspace>
            <Document />
            <ScrollColumn>
              <Draw d="M8 1v9M2 4h12M2 14h12" s={5} w={0.8} />
              <svg width="4" height="4" viewBox="0 0 4 4" fill="#777"><path d="M2 0l2 3H0z" /></svg>
              <ScrollThumb />
              <Spacer />
              <svg width="4" height="4" viewBox="0 0 4 4" fill="#777"><path d="M0 0h4L2 3z" /></svg>
              <Draw d="M8 1v9M2 4h12M2 14h12" s={5} w={0.8} />
              <Draw d={g.border} s={5} w={0.8} />
              <Draw d="M8 14V5M2 11h12M2 2h12" s={5} w={0.8} />
            </ScrollColumn>
            <Panel />
            <Rail>
              <Shirt size={9} strokeWidth={1.500} />
              <svg width="9" height="2" viewBox="0 0 9 2" fill="#999c9a"><path d="M0 0h2v1.500H0zM3.500 0h2v1.500h-2zM7 0h2v1.500H7z" /></svg>
            </Rail>
            <FloatTab>
              «
              <svg width="12" height="12" viewBox="0 0 16 16"><rect width="15" height="15" rx="3" fill="#0c67f0" /><path d={boltPath} transform="translate(1.500 1.500) scale(.75)" fill="#fff" /><circle cx="13.500" cy="13.500" r="2.500" fill="#5fd38a" /></svg>
            </FloatTab>
            <ImeBar>
              <SogouMark s={17} />
              <span>中</span><span>•,</span>
              <Mic size={9} strokeWidth={3} />
              <svg width="9" height="7" viewBox="0 0 9 7"><rect width="9" height="7" rx="1" fill="#1766cf" /><path d="M1.500 2.500h6M2.500 5h4" stroke="#fff" /></svg>
              <svg width="11" height="10" viewBox="0 0 11 10"><path d="M0 2l3-2 2 1 3-1 3 2-1 3-1.500-.5V10h-6V4.500L1 5z" fill="#ae63d3" /><circle cx="9" cy="2" r="2" fill="#ee3e34" /></svg>
              <svg width="8" height="8" viewBox="0 0 8 8" fill="#1766cf"><path d="M0 0h3.500v3.500H0zM4.500 0H8v3.500H4.500zM0 4.500h3.500V8H0zM4.500 4.500H8V8H4.500z" /></svg>
              <svg width="10" height="8" viewBox="0 0 10 8"><circle cx="5" cy="4" r="4" fill="#fbe3d2" /><path d="M0 2h5l3 2-3 2z" fill="#d9501e" /><path d="M7 2l3-2v3z" fill="#f8c43c" /></svg>
            </ImeBar>
          </Workspace>
          <StatusBar>
            <span>页面: 1/1</span><Divider $h={7} />
            <span>字数: 25</span><Divider $h={7} />
            <Cell $w={51}>拼写检查: 打开<Down /></Cell>
            <Cell $w={60}><Draw d={g.docCheck} s={8} w={0.9} />AI 校对<Down /></Cell>
            <Spacer />
            <Cell $w={18} aria-label="页面视图"><Draw d={g.fit} s={8} w={0.8} /></Cell>
            <Cell $w={38}>190%<Spacer /><Down /><Spacer /></Cell>
            <Cell $w={10} aria-label="缩小"><Draw d={g.minus} s={8} w={1} /></Cell>
            <Zoom type="range" aria-label="缩放" min={0} max={100} defaultValue={59} />
            <Cell $w={14} aria-label="放大"><Draw d={g.plus} s={7} w={1} /></Cell>
            <Cell $w={20} aria-label="全屏"><Draw d={g.expand} s={8} w={0.8} /></Cell>
          </StatusBar>
          <Tasks />
        </Remote>
      </Window>

      <ControlPopup>
        <ScreenPick aria-label="屏幕 1">
          <svg width="20" height="18" viewBox="0 0 20 18" fill="none" stroke="#0b6cff" strokeWidth="1.500"><path d="M11 12.500H2.500a1.500 1.500 0 0 1-1.500-1.500V2.500A1.500 1.500 0 0 1 2.500 1H16a1.500 1.500 0 0 1 1.500 1.500V8M4 15.500h8" /><path d="M7.800 5l1.700-.8V10M7.800 9.700h3.400" strokeWidth="1.200" /><circle cx="15.500" cy="12.500" r="4" fill="#0b6cff" stroke="none" /><path d="M13.500 12.500l1.500 1.400 2.500-2.600" stroke="#fff" strokeWidth="1.100" /></svg>
        </ScreenPick>
        <Rule />
        <PopupList>
          {controls.map((c) => (
            <li key={c.name}><PopupItem $active={c.active}><PopupIcon>{c.icon}</PopupIcon><PopupLabel>{c.name}</PopupLabel></PopupItem></li>
          ))}
        </PopupList>
        <Rule />
        <PopupItem>
          <PopupIcon><svg width="16" height="16" viewBox="0 0 16 16" fill="none" stroke="#f03d48" strokeWidth="1.300"><circle cx="8" cy="8" r="7" /><path d="M5.700 5.700l4.600 4.600M10.300 5.700l-4.600 4.600" /></svg></PopupIcon>
          <PopupLabel>退出远控</PopupLabel>
        </PopupItem>
      </ControlPopup>

      <ScreenPopup>
        <PopupList>
          <li><PopupItem $active><PopupLabel>分辨率</PopupLabel><ChevronRight size={16} strokeWidth={1.500} color="#5d6575" /></PopupItem></li>
          <li><PopupItem><PopupLabel>扩展虚拟屏</PopupLabel><ChevronRight size={16} strokeWidth={1.500} color="#5d6575" /></PopupItem></li>
          <li><PopupItem><PopupLabel>查看所有电脑(Alt+~)</PopupLabel></PopupItem></li>
        </PopupList>
      </ScreenPopup>

      <ResolutionPopup>
        <PopupList>
          {resolutions.map((r, i) => (
            <li key={r}><PopupItem><PopupLabel>{r}</PopupLabel>{i === 0 && <CheckMark size={12} strokeWidth={3} color="#1a73f8" />}</PopupItem></li>
          ))}
        </PopupList>
        <ResolutionThumb />
      </ResolutionPopup>

      <EdgeHandle aria-label="展开侧栏"><svg width="7" height="10" viewBox="0 0 7 10" fill="none" stroke="#333"><path d="M6 1 2 5l4 4" /></svg></EdgeHandle>
    </Desktop>
  );
}
